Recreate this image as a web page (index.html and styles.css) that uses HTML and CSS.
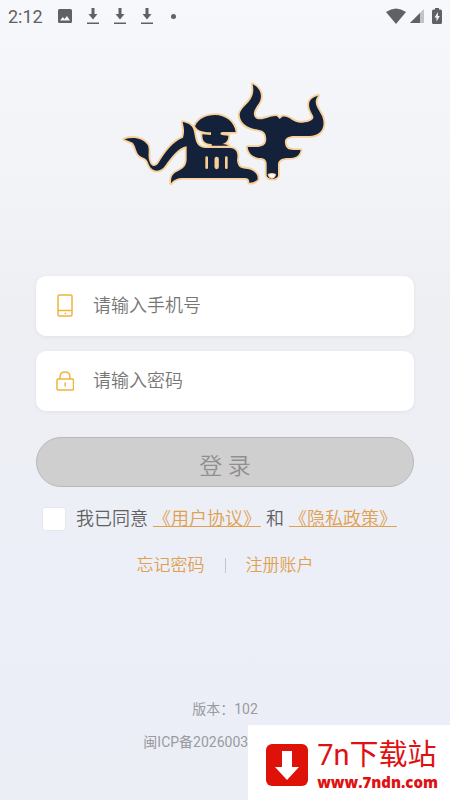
FILE: index.html
```html
<!DOCTYPE html>
<html lang="zh-CN">
<head>
  <meta charset="UTF-8" />
  <meta name="viewport" content="width=device-width, initial-scale=1.0"/>
  <title>登录</title>
  <link rel="stylesheet" href="styles.css">
</head>
<body>
  <header class="status-bar">
    <div class="status-left">
      <span class="time">2:12</span>
      <svg class="picture" width="14" height="14" viewBox="0 0 14 14"><path fill-rule="evenodd" d="M1.5 0h11A1.5 1.5 0 0 1 14 1.500v11a1.500 1.500 0 0 1-1.500 1.500h-11A1.500 1.500 0 0 1 0 12.500v-11A1.500 1.500 0 0 1 1.500 0zM2 11.500h10L9 7 6.500 10 4.800 8z"/></svg>
      <svg width="12" height="16" viewBox="0 0 12 16"><path d="M4.500 0h3v6h3L6 11.500 1.500 6h3zM0 14.500h12V16H0z"/></svg>
      <svg width="12" height="16" viewBox="0 0 12 16"><path d="M4.500 0h3v6h3L6 11.500 1.500 6h3zM0 14.500h12V16H0z"/></svg>
      <svg width="12" height="16" viewBox="0 0 12 16"><path d="M4.500 0h3v6h3L6 11.500 1.500 6h3zM0 14.500h12V16H0z"/></svg>
      <span class="dot"></span>
    </div>
    <div class="status-right">
      <svg width="20" height="16" viewBox="0 0 20 16"><path d="M0 4Q10-3 20 4L10 16z"/></svg>
      <svg width="14" height="14" viewBox="0 0 14 14"><path d="M14 0v14H0z" opacity=".35"/><path d="M10 4v10H0z"/></svg>
      <svg class="battery" width="10" height="16" viewBox="0 0 10 16"><path fill-rule="evenodd" d="M3 0h4v1.500h1.500Q10 1.500 10 3v11.500Q10 16 8.500 16h-7Q0 16 0 14.500V3Q0 1.500 1.500 1.500H3zM6 4 2.500 9.500h2V13.500L7.800 8h-2z"/></svg>
    </div>
  </header>

  <main>
    <svg class="logo" viewBox="0 0 660 360" role="img" aria-label="牛">
      <g class="logo-shape">
        <path d="M28 193C55 184 85 190 98 210C105 225 97 242 103 258C108 275 120 278 130 265C150 232 172 200 204 188C210 170 206 155 203 141C222 146 235 150 238 175C242 200 246 217 270 219H345C365 220 370 235 366 255C368 275 375 280 392 281C418 283 432 300 427 315L415 322L403 323C403 313 400 309 385 309H205C187 309 175 315 168 325C168 302 172 297 190 288C212 278 215 265 215 250V214C190 218 170 245 152 270C138 292 112 293 102 270C98 258 95 252 85 248C58 240 66 210 50 202Z"/>
        <path d="M240 154C250 130 275 120 300 120C330 120 358 140 362 171H322C314 173 314 180 325 181L340 182C340 195 335 203 322 207Q335 207 340 212H290V207C265 207 262 195 262 178L288 180V172C265 172 248 168 240 154Z"/>
        <path d="M413 28C440 42 445 68 428 90C415 108 412 122 425 131C445 138 462 122 485 123L494 132L502 125C525 122 530 142 555 143C580 143 600 135 594 122C575 92 578 70 609 62C592 85 610 100 622 125C634 160 615 184 580 183H540C515 183 508 192 510 205C512 220 520 225 535 225H557C553 245 540 249 520 249C500 249 490 255 489 268V300C489 315 456 315 455 300V268C455 255 448 249 435 249C415 248 400 235 398 216H430C450 214 456 203 453 185C451 166 435 165 418 162C390 156 374 140 374 118C378 90 425 80 413 28Z"/>
      </g>
      <path class="logo-line" d="M275 248v30M334 248v30"/>
      <path class="logo-line wide" d="M305 252v24"/>
      <path class="logo-ring" d="M459 298q12-5 23 0q-2 12-11 12t-12-12z"/>
    </svg>

    <form class="login-form">
      <div class="field">
        <label for="phone">
          <svg width="18" height="24" viewBox="0 0 18 24"><rect x="2" y="1" width="14" height="21" rx="1.500"/><path d="M2 16.500h14M8.500 19.500h1.500"/></svg>
        </label>
        <input type="tel" id="phone" placeholder="请输入手机号" aria-label="手机号">
      </div>
      <div class="field">
        <label for="password">
          <svg width="18" height="24" viewBox="0 0 18 24"><rect x="1" y="10" width="16.500" height="11" rx="1"/><path d="M4 10V8q0-5 5-5t5 5v2M9.200 13.500v4"/></svg>
        </label>
        <input type="password" id="password" placeholder="请输入密码" aria-label="密码">
      </div>

      <button type="submit" class="login-btn" disabled>登 录</button>

      <div class="agree">
        <input type="checkbox" id="agree">
        <label for="agree">我已同意</label>
        <a href="#">《用户协议》</a>
        <span>和</span>
        <a href="#">《隐私政策》</a>
      </div>
    </form>

    <nav class="links">
      <a href="#">忘记密码</a>
      <span class="divider"></span>
      <a href="#">注册账户</a>
    </nav>
  </main>

  <footer>
    <p>版本：102</p>
    <p>闽ICP备2026003218号-1A</p>
  </footer>

  <aside class="watermark">
    <svg width="44" height="44" viewBox="0 0 44 44"><rect class="mark-bg" x="1" y="1" width="42" height="42" rx="6"/><path class="mark-arrow" d="M17 8h10v16h7L22 37 10 24h7z"/></svg>
    <div class="mark-text">
      <strong>7n下载站</strong>
      <span>www.7ndn.com</span>
    </div>
  </aside>
</body>
</html>
```
FILE: styles.css
```css
* {
  box-sizing: border-box;
}

body {
  margin: 0;
  min-height: 100vh;
  display: flex;
  flex-direction: column;
  background: linear-gradient(#f6f8fc 0%, #eeeff3 40%, #eceff8 75%, #eceef6 100%);
  color: #5f6061;
  font-family: Roboto, 'Noto Sans CJK SC', sans-serif;
}

a {
  color: #e0a050;
}

.status-bar {
  display: flex;
  justify-content: space-between;
  align-items: center;
  height: 32px;
  padding: 0 8px;
}

.status-bar svg {
  fill: #5f6163;
}

.status-left {
  display: flex;
  align-items: center;
  gap: 15px;
}

.time {
  font-size: 18px;
}

.dot {
  width: 5px;
  height: 5px;
  margin-left: 3px;
  border-radius: 50%;
  background: #5f6163;
}

.status-right {
  display: flex;
  align-items: center;
  gap: 4px;
}

.battery {
  margin-left: 4px;
}

main {
  padding: 43px 36px 0;
  font-weight: 350;
}

.logo {
  display: block;
  width: 220px;
  margin: 0 auto;
}

.logo-shape {
  fill: #14213a;
  stroke: #f8d09a;
  stroke-width: 11px;
  stroke-linejoin: round;
  paint-order: stroke;
}

.logo-line {
  fill: none;
  stroke: #f8ce94;
  stroke-width: 8px;
  stroke-linecap: round;
}

.logo-line.wide {
  stroke-width: 13px;
}

.logo-ring {
  fill: #fff;
  stroke: #f8ce94;
  stroke-width: 3px;
}

.login-form {
  margin-top: 81px;
}

.field {
  display: flex;
  align-items: center;
  height: 60px;
  margin-bottom: 15px;
  padding: 0 20px;
  background: #fff;
  border-radius: 10px;
  box-shadow: 0 1px 4px rgba(0,0,0,0.06);
}

.field label {
  display: flex;
  margin-right: 19px;
}

.field svg {
  fill: none;
  stroke: #efb43f;
  stroke-width: 1.5px;
}

.field input {
  flex: 1;
  min-width: 0;
  padding: 0 0 2px;
  border: none;
  outline: none;
  background: none;
  font-family: inherit;
  font-size: 18px;
  font-weight: inherit;
}

.field input::placeholder {
  color: #777;
}

.login-btn {
  display: block;
  width: 100%;
  height: 50px;
  margin-top: 26px;
  padding: 4px 0 0;
  border: 1px solid #b9b9b9;
  border-radius: 25px;
  background: #cfcfcf;
  color: #8f8f8f;
  font-family: inherit;
  font-size: 23px;
  font-weight: inherit;
}

.agree {
  display: flex;
  align-items: center;
  gap: 5px;
  margin-top: 18px;
  padding-left: 6px;
  font-size: 18px;
  line-height: 28px;
  white-space: nowrap;
}

.agree input {
  appearance: none;
  width: 24px;
  height: 24px;
  margin: 0 5px 0 0;
  border: 1px solid #e6e7e9;
  border-radius: 3px;
  background: #fff;
}

.links {
  display: flex;
  justify-content: center;
  align-items: center;
  gap: 20px;
  margin-top: 19px;
  font-size: 17px;
  line-height: 26px;
}

.links a {
  text-decoration: none;
}

.divider {
  width: 1px;
  height: 15px;
  background: #c3c5c9;
}

footer {
  margin-top: auto;
  padding-bottom: 41px;
  text-align: center;
  color: #999b9f;
  font-size: 14px;
  line-height: 33px;
}

footer p {
  margin: 0;
}

.watermark {
  position: absolute;
  right: 0;
  bottom: 0;
  display: flex;
  align-items: center;
  gap: 8px;
  height: 75px;
  padding: 4px 12px 0 17px;
  background: #fff;
}

.mark-bg {
  fill: #de1209;
}

.mark-arrow {
  fill: #fff;
}

.mark-text {
  display: flex;
  flex-direction: column;
  color: #de1212;
}

.mark-text strong {
  font-size: 29px;
  font-weight: 400;
  line-height: 34px;
}

.mark-text span {
  font-family: 'Open Sans', sans-serif;
  font-size: 15px;
  font-weight: 800;
  line-height: 20px;
}
```
